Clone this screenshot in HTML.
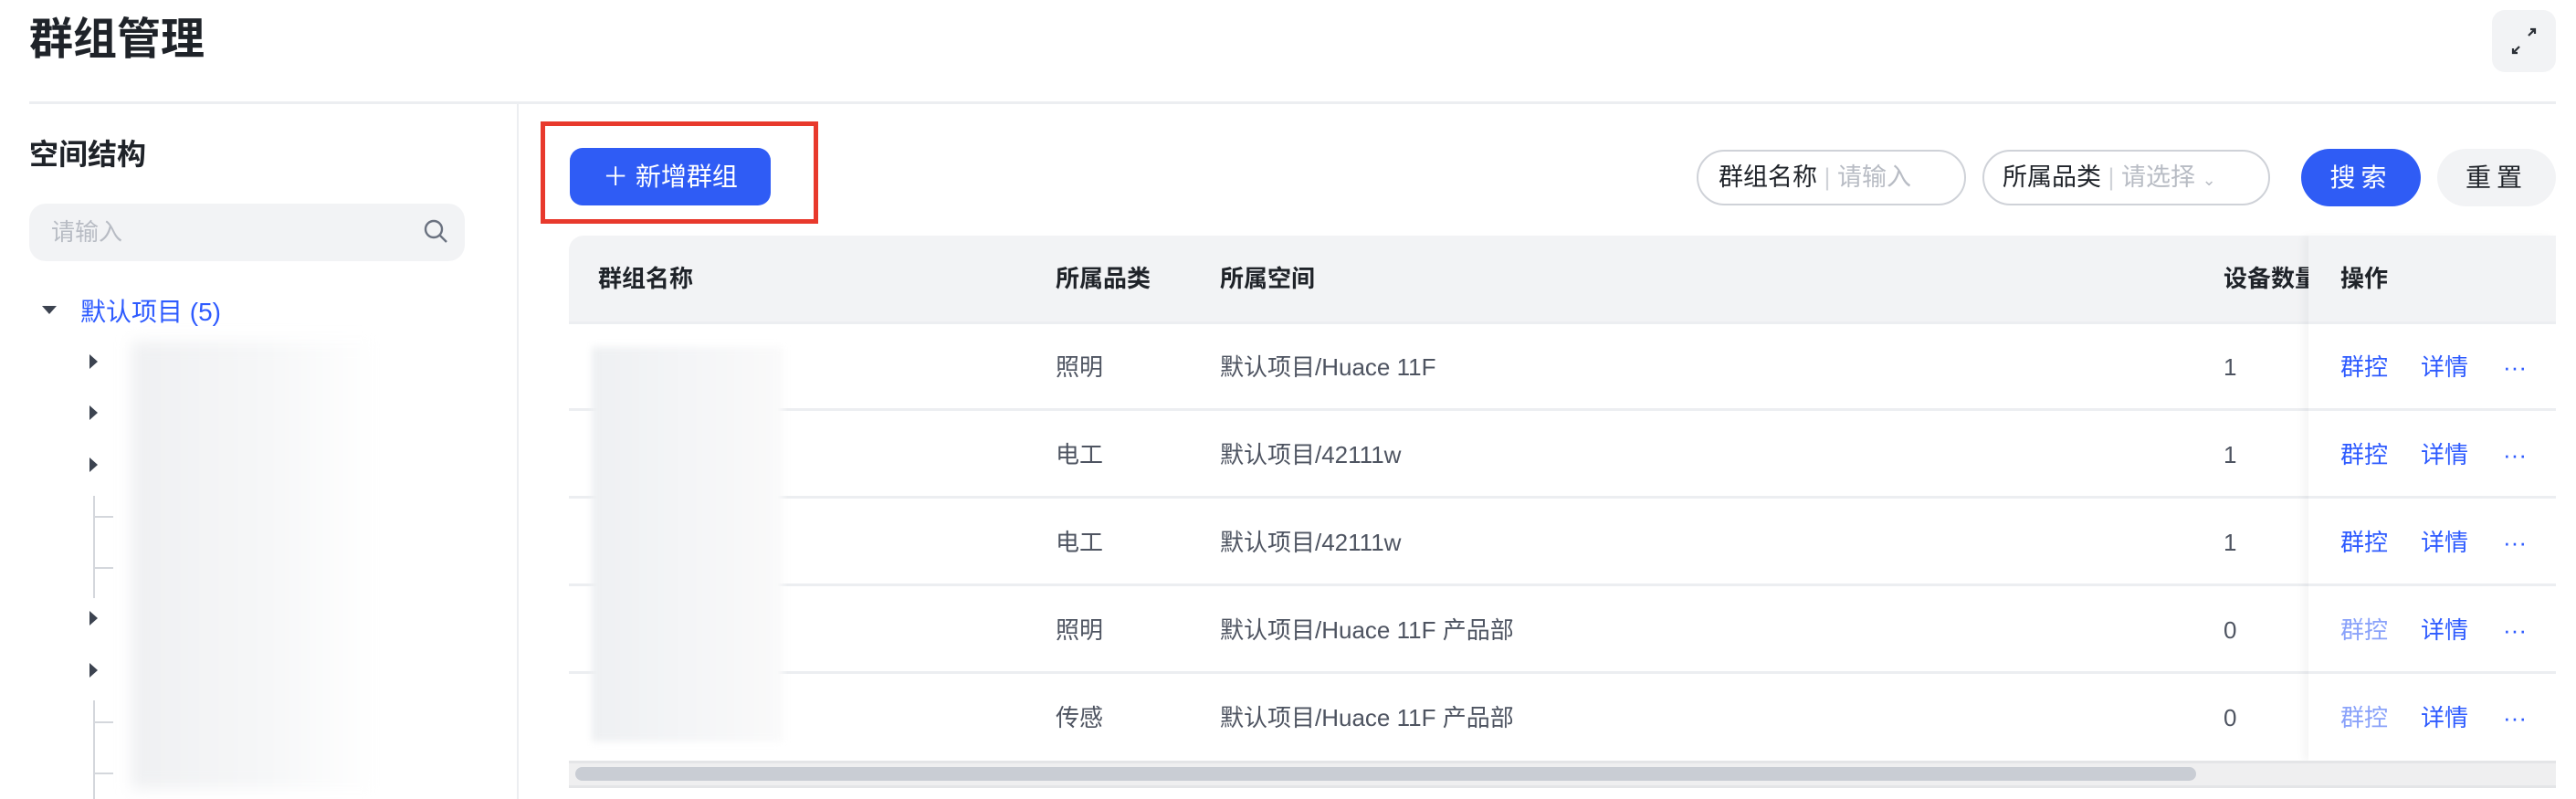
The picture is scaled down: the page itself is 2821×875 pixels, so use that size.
<!DOCTYPE html>
<html><head><meta charset="utf-8"><style>
*{margin:0;padding:0;box-sizing:border-box}
body{width:2821px;height:875px;background:#fff;position:relative;overflow:hidden;font-family:"Liberation Sans","Noto Sans CJK SC",sans-serif;color:#4e5461}
.a{position:absolute;white-space:nowrap}
.h{font-weight:600;color:#1f2329}
.cell{font-size:26px;line-height:30px}
.blue{color:#2e5bff}
.light{color:#8aa2fa}
.line{position:absolute;height:3px;background:#eceef1}
.tri{position:absolute;width:0;height:0;border-top:8px solid transparent;border-bottom:8px solid transparent;border-left:9px solid #3c4350}
.tv{position:absolute;width:2px;background:#d4d7dc}
.th{position:absolute;height:2px;width:22px;background:#d4d7dc}
</style></head><body>

<div class="a" style="left:32px;top:14px;font-size:48px;font-weight:700;color:#1f2329;line-height:60px">群组管理</div>
<div class="a" style="left:2729px;top:11px;width:70px;height:68px;background:#f2f3f5;border-radius:14px">
<svg width="70" height="68" viewBox="0 0 70 68"><g stroke="#2b2f36" stroke-width="2.2" fill="none"><path d="M40 28l7-7M42 21h5v5M30 40l-7 7M23 42v5h5"/></g></svg></div>
<div class="line" style="left:32px;top:111px;width:2767px;height:3px"></div>
<div style="position:absolute;left:566px;top:113px;width:2px;height:762px;background:#eceef1"></div>

<div class="a h" style="left:32px;top:150px;font-size:32px;line-height:38px">空间结构</div>
<div class="a" style="left:32px;top:223px;width:477px;height:63px;background:#f2f3f5;border-radius:18px"></div>
<div class="a" style="left:56px;top:238px;font-size:26px;color:#b8bcc4;line-height:32px">请输入</div>
<svg class="a" style="left:460px;top:236px" width="36" height="36" viewBox="0 0 36 36"><circle cx="15" cy="15" r="9" stroke="#6b7280" stroke-width="2.4" fill="none"/><path d="M22 22l7 7" stroke="#6b7280" stroke-width="2.4"/></svg>

<div class="a" style="left:46px;top:335px;width:0;height:0;border-left:8px solid transparent;border-right:8px solid transparent;border-top:9px solid #3c4350"></div>
<div class="a" style="left:88px;top:325px;font-size:28px;color:#2e5bff;line-height:34px">默认项目 (5)</div>
<div class="tri" style="left:98px;top:388px"></div>
<div class="tri" style="left:98px;top:444px"></div>
<div class="tri" style="left:98px;top:501px"></div>
<div class="tri" style="left:98px;top:669px"></div>
<div class="tri" style="left:98px;top:726px"></div>
<div class="tv" style="left:102px;top:543px;height:112px"></div>
<div class="th" style="left:102px;top:565px"></div>
<div class="th" style="left:102px;top:621px"></div>
<div class="tv" style="left:102px;top:767px;height:108px"></div>
<div class="th" style="left:102px;top:790px"></div>
<div class="th" style="left:102px;top:846px"></div>
<div class="a" style="left:144px;top:374px;width:270px;height:490px;background:linear-gradient(90deg,#eff0f2,#f6f7f8 55%,#fff);filter:blur(8px)"></div>

<div class="a" style="left:592px;top:133px;width:304px;height:112px;border:5px solid #e8392c"></div>
<div class="a" style="left:624px;top:162px;width:220px;height:63px;background:#2f5cf5;border-radius:14px;color:#fff;font-size:28px;line-height:63px;text-align:center">＋ 新增群组</div>

<div class="a" style="left:1858px;top:164px;width:295px;height:61px;border:2px solid #cfd2d8;border-radius:31px"></div>
<div class="a" style="left:1882px;top:176px;font-size:27px;line-height:36px;color:#1f2329">群组名称 <span style="color:#d0d3d8">|</span> <span style="color:#b8bcc4">请输入</span></div>
<div class="a" style="left:2171px;top:164px;width:315px;height:61px;border:2px solid #cfd2d8;border-radius:31px"></div>
<div class="a" style="left:2193px;top:176px;font-size:27px;line-height:36px;color:#1f2329">所属品类 <span style="color:#d0d3d8">|</span> <span style="color:#b8bcc4">请选择</span> <span style="color:#b8bcc4;font-size:18px">⌄</span></div>
<div class="a" style="left:2520px;top:163px;width:131px;height:63px;background:#2f5cf5;border-radius:32px;color:#fff;font-size:28px;line-height:63px;text-align:center;letter-spacing:6px">搜索</div>
<div class="a" style="left:2669px;top:163px;width:130px;height:63px;background:#f2f3f5;border-radius:32px;color:#1f2329;font-size:28px;line-height:63px;text-align:center;letter-spacing:6px">重置</div>

<div class="a" style="left:623px;top:258px;width:2176px;height:95px;background:#f2f3f5;border-radius:16px 0 0 0"></div>
<div class="line" style="left:623px;top:352px;width:2176px"></div>
<div class="a h cell" style="left:655px;top:290px">群组名称</div>
<div class="a h cell" style="left:1156px;top:290px">所属品类</div>
<div class="a h cell" style="left:1336px;top:290px">所属空间</div>
<div class="a h cell" style="left:2435px;top:290px;width:96px;overflow:hidden">设备数量</div>

<div class="line" style="left:623px;top:447px;width:2176px"></div>
<div class="line" style="left:623px;top:543px;width:2176px"></div>
<div class="line" style="left:623px;top:639px;width:2176px"></div>
<div class="line" style="left:623px;top:735px;width:2176px"></div>

<div class="a cell" style="left:1156px;top:387px">照明</div><div class="a cell" style="left:1336px;top:387px">默认项目/Huace 11F</div><div class="a cell" style="left:2435px;top:387px">1</div>
<div class="a cell" style="left:1156px;top:483px">电工</div><div class="a cell" style="left:1336px;top:483px">默认项目/42111w</div><div class="a cell" style="left:2435px;top:483px">1</div>
<div class="a cell" style="left:1156px;top:579px">电工</div><div class="a cell" style="left:1336px;top:579px">默认项目/42111w</div><div class="a cell" style="left:2435px;top:579px">1</div>
<div class="a cell" style="left:1156px;top:675px">照明</div><div class="a cell" style="left:1336px;top:675px">默认项目/Huace 11F 产品部</div><div class="a cell" style="left:2435px;top:675px">0</div>
<div class="a cell" style="left:1156px;top:771px">传感</div><div class="a cell" style="left:1336px;top:771px">默认项目/Huace 11F 产品部</div><div class="a cell" style="left:2435px;top:771px">0</div>

<div class="a" style="left:648px;top:380px;width:209px;height:432px;background:linear-gradient(90deg,#eef0f2,#f4f5f7 50%,#fafafa);filter:blur(4px)"></div>

<div class="a" style="left:2528px;top:258px;width:271px;height:575px;background:#fff;box-shadow:-6px 0 8px rgba(0,0,0,0.04)"></div>
<div class="a" style="left:2528px;top:258px;width:271px;height:95px;background:#f2f3f5"></div>
<div class="line" style="left:2528px;top:352px;width:271px"></div>
<div class="line" style="left:2528px;top:447px;width:271px"></div>
<div class="line" style="left:2528px;top:543px;width:271px"></div>
<div class="line" style="left:2528px;top:639px;width:271px"></div>
<div class="line" style="left:2528px;top:735px;width:271px"></div>
<div class="a h cell" style="left:2563px;top:290px">操作</div>
<div class="a cell blue" style="left:2563px;top:387px">群控</div><div class="a cell blue" style="left:2651px;top:387px">详情</div><div class="a cell blue" style="left:2741px;top:387px">···</div>
<div class="a cell blue" style="left:2563px;top:483px">群控</div><div class="a cell blue" style="left:2651px;top:483px">详情</div><div class="a cell blue" style="left:2741px;top:483px">···</div>
<div class="a cell blue" style="left:2563px;top:579px">群控</div><div class="a cell blue" style="left:2651px;top:579px">详情</div><div class="a cell blue" style="left:2741px;top:579px">···</div>
<div class="a cell light" style="left:2563px;top:675px">群控</div><div class="a cell blue" style="left:2651px;top:675px">详情</div><div class="a cell blue" style="left:2741px;top:675px">···</div>
<div class="a cell light" style="left:2563px;top:771px">群控</div><div class="a cell blue" style="left:2651px;top:771px">详情</div><div class="a cell blue" style="left:2741px;top:771px">···</div>

<div class="a" style="left:623px;top:833px;width:2176px;height:30px;background:#efeff0;border-top:3px solid #e4e5e7;border-bottom:3px solid #e4e5e7"></div>
<div class="a" style="left:630px;top:840px;width:1775px;height:15px;background:#c9cdd4;border-radius:8px"></div>
</body></html>
